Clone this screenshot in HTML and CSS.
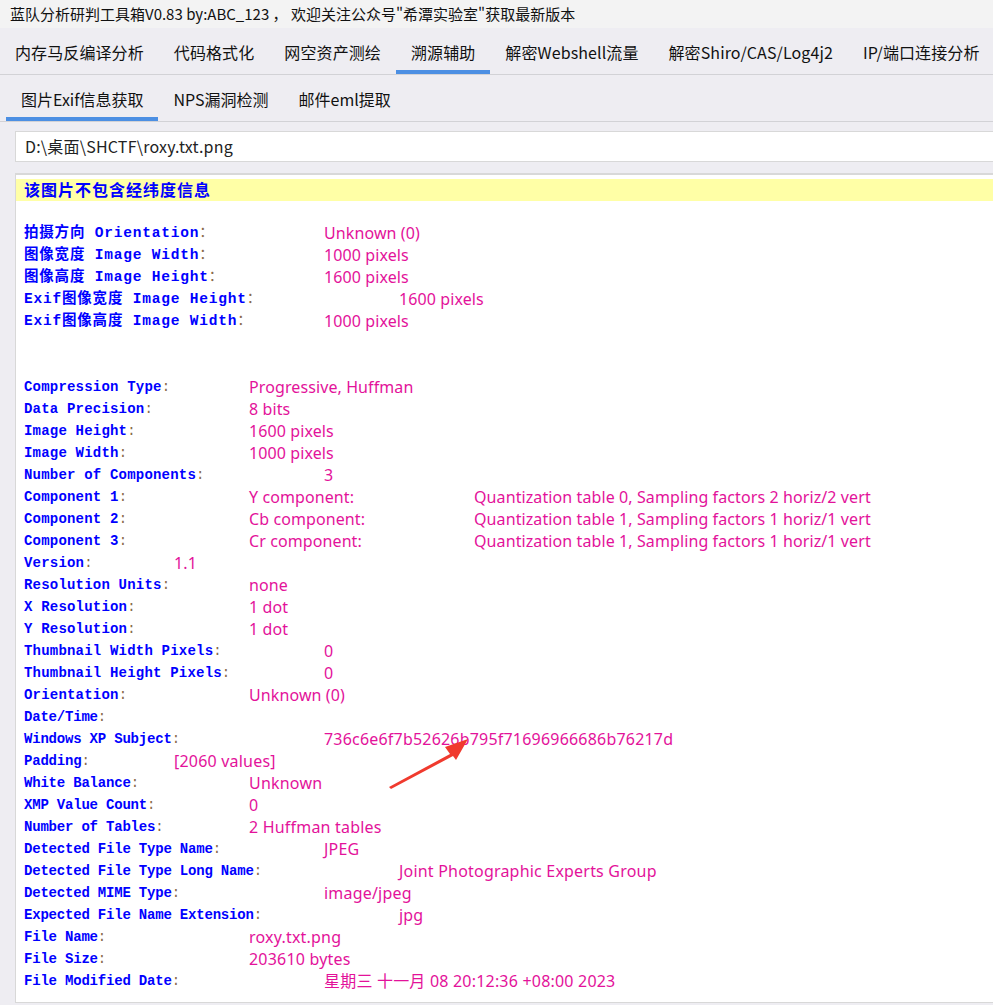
FILE: index.html
```html
<!DOCTYPE html>
<html lang="zh-CN">
<head>
<meta charset="utf-8">
<title>蓝队分析研判工具箱</title>
<link rel="stylesheet" href="styles.css">
</head>
<body>
<div class="app">
  <div class="titlebar">蓝队分析研判工具箱V0.83 by:ABC_123 ， 欢迎关注公众号"希潭实验室"获取最新版本</div>
  <div class="tabs main-tabs">
    <div class="tab">内存马反编译分析</div>
    <div class="tab">代码格式化</div>
    <div class="tab">网空资产测绘</div>
    <div class="tab active">溯源辅助</div>
    <div class="tab">解密Webshell流量</div>
    <div class="tab">解密Shiro/CAS/Log4j2</div>
    <div class="tab">IP/端口连接分析</div>
  </div>
  <div class="tabs sub-tabs">
    <div class="tab active">图片Exif信息获取</div>
    <div class="tab">NPS漏洞检测</div>
    <div class="tab">邮件eml提取</div>
  </div>
  <div class="content">
    <div class="path">D:\桌面\SHCTF\roxy.txt.png</div>
    <div class="panel">
      <div class="notice">该图片不包含经纬度信息</div>
      <div class="blank"></div>
      <div class="row"><span class="lab cn w300">拍摄方向 Orientation<i>：</i></span><span class="val">Unknown (0)</span></div>
      <div class="row"><span class="lab cn w300">图像宽度 Image Width<i>：</i></span><span class="val">1000 pixels</span></div>
      <div class="row"><span class="lab cn w300">图像高度 Image Height<i>：</i></span><span class="val">1600 pixels</span></div>
      <div class="row"><span class="lab cn w375">Exif图像宽度 Image Height<i>：</i></span><span class="val">1600 pixels</span></div>
      <div class="row"><span class="lab cn w300">Exif图像高度 Image Width<i>：</i></span><span class="val">1000 pixels</span></div>
      <div class="blank"></div>
      <div class="blank"></div>
      <div class="row"><span class="lab w225">Compression Type<i>:</i></span><span class="val">Progressive, Huffman</span></div>
      <div class="row"><span class="lab w225">Data Precision<i>:</i></span><span class="val">8 bits</span></div>
      <div class="row"><span class="lab w225">Image Height<i>:</i></span><span class="val">1600 pixels</span></div>
      <div class="row"><span class="lab w225">Image Width<i>:</i></span><span class="val">1000 pixels</span></div>
      <div class="row"><span class="lab w300">Number of Components<i>:</i></span><span class="val">3</span></div>
      <div class="row"><span class="lab w225">Component 1<i>:</i></span><span class="val w225">Y component:</span><span class="val">Quantization table 0, Sampling factors 2 horiz/2 vert</span></div>
      <div class="row"><span class="lab w225">Component 2<i>:</i></span><span class="val w225">Cb component:</span><span class="val">Quantization table 1, Sampling factors 1 horiz/1 vert</span></div>
      <div class="row"><span class="lab w225">Component 3<i>:</i></span><span class="val w225">Cr component:</span><span class="val">Quantization table 1, Sampling factors 1 horiz/1 vert</span></div>
      <div class="row"><span class="lab w150">Version<i>:</i></span><span class="val">1.1</span></div>
      <div class="row"><span class="lab w225">Resolution Units<i>:</i></span><span class="val">none</span></div>
      <div class="row"><span class="lab w225">X Resolution<i>:</i></span><span class="val">1 dot</span></div>
      <div class="row"><span class="lab w225">Y Resolution<i>:</i></span><span class="val">1 dot</span></div>
      <div class="row"><span class="lab w300">Thumbnail Width Pixels<i>:</i></span><span class="val">0</span></div>
      <div class="row"><span class="lab w300">Thumbnail Height Pixels<i>:</i></span><span class="val">0</span></div>
      <div class="row"><span class="lab w225">Orientation<i>:</i></span><span class="val">Unknown (0)</span></div>
      <div class="row"><span class="lab n w225">Date/Time<i>:</i></span></div>
      <div class="row"><span class="lab n w300">Windows XP Subject<i>:</i></span><span class="val n">736c6e6f7b52626b795f71696966686b76217d</span>
        <svg class="arrow" width="90" height="60" viewBox="0 0 90 60"><polygon points="1,52 62,19 57,12 80,4 68,25 65,21 3,54" fill="#f03a2e"/></svg>
      </div>
      <div class="row"><span class="lab n w150">Padding<i>:</i></span><span class="val n">[2060 values]</span></div>
      <div class="row"><span class="lab n w225">White Balance<i>:</i></span><span class="val n">Unknown</span></div>
      <div class="row"><span class="lab n w225">XMP Value Count<i>:</i></span><span class="val n">0</span></div>
      <div class="row"><span class="lab n w225">Number of Tables<i>:</i></span><span class="val n">2 Huffman tables</span></div>
      <div class="row"><span class="lab n w300">Detected File Type Name<i>:</i></span><span class="val n">JPEG</span></div>
      <div class="row"><span class="lab n w375">Detected File Type Long Name<i>:</i></span><span class="val n">Joint Photographic Experts Group</span></div>
      <div class="row"><span class="lab n w300">Detected MIME Type<i>:</i></span><span class="val n">image/jpeg</span></div>
      <div class="row"><span class="lab n w375">Expected File Name Extension<i>:</i></span><span class="val n">jpg</span></div>
      <div class="row"><span class="lab n w225">File Name<i>:</i></span><span class="val n">roxy.txt.png</span></div>
      <div class="row"><span class="lab n w225">File Size<i>:</i></span><span class="val n">203610 bytes</span></div>
      <div class="row"><span class="lab n w300">File Modified Date<i>:</i></span><span class="val n">星期三 十一月 08 20:12:36 +08:00 2023</span></div>
    </div>
  </div>
</div>
</body>
</html>
```
FILE: styles.css
```css
* { box-sizing: border-box; }
html, body { margin: 0; padding: 0; }
body {
  width: 993px;
  height: 1005px;
  overflow: hidden;
  background: #eeedf2;
  font-family: "Noto Sans CJK SC", "Noto Sans", sans-serif;
  color: #111;
}
.app { display: flex; flex-direction: column; height: 1005px; }
.titlebar {
  height: 28px;
  background: #f3f3f3;
  font-size: 15px;
  line-height: 28px;
  padding-left: 10px;
  white-space: nowrap;
  color: #111;
}
.tabs {
  display: flex;
  border-bottom: 1px solid #d2d2d6;
  white-space: nowrap;
}
.main-tabs { height: 47px; }
.sub-tabs { height: 47px; padding-left: 6px; }
.tab {
  font-size: 16px;
  padding: 0 15px;
  height: 46px;
  line-height: 49px;
  border-bottom: 4px solid transparent;
}
.main-tabs .tab { letter-spacing: 0.1px; }
.tab.active { border-bottom-color: #4c8fe3; }
.content { padding: 9px 0 0 15px; flex: 1; display: flex; flex-direction: column; }
.path {
  height: 31px;
  background: #fff;
  border: 1px solid #d8d8d8;
  border-right: none;
  font-size: 16px;
  letter-spacing: 0.2px;
  line-height: 28px;
  padding-left: 9px;
  color: #222;
  margin-right: -10px;
}
.panel {
  margin-top: 11px;
  background: #fff;
  border: 1px solid #d8d8d8;
  border-top-width: 2px;
  border-right: none;
  margin-right: -10px;
  padding: 4px 0 0 0;
  height: 830px;
}
.notice {
  background: #ffffa6;
  height: 22px;
  line-height: 21px;
  padding-left: 8px;
  color: #0000ff;
  font-weight: bold;
  font-size: 16px;
  letter-spacing: 1px;
  font-family: "Noto Sans CJK SC", serif;
}
.blank { height: 22px; }
.row {
  display: flex;
  height: 22px;
  line-height: 20px;
  padding-left: 8px;
  white-space: nowrap;
  position: relative;
}
.lab {
  flex: none;
  color: #0000ff;
  font-family: "Liberation Mono", "Noto Sans CJK SC", monospace;
  font-weight: bold;
  font-size: 14px;
  letter-spacing: 0.2px;
}
.lab.cn { font-size: 14.5px; letter-spacing: 0.8px; }
.lab i { font-style: normal; font-weight: normal; color: #8a6a4a; }
.lab.n { font-family: "Liberation Mono", monospace; font-size: 14px; letter-spacing: -0.2px; }
.val {
  flex: none;
  color: #e3129a;
  font-family: "Noto Sans", "Noto Sans CJK SC", sans-serif;
  font-size: 16px;
  letter-spacing: 0.1px;
}
.val.n { letter-spacing: 0.2px; }
.w150 { width: 150px; }
.w225 { width: 225px; }
.w300 { width: 300px; }
.w375 { width: 375px; }
.arrow {
  position: absolute;
  left: 372px;
  top: 6px;
}
```
